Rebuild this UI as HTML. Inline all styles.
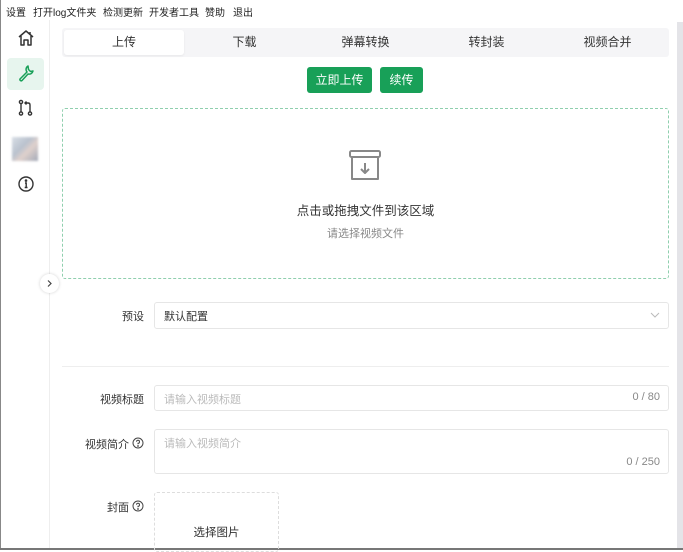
<!DOCTYPE html>
<html><head><meta charset="utf-8"><style>
*{box-sizing:border-box;margin:0;padding:0}
body{width:683px;height:550px;overflow:hidden;background:#fff;font-family:"Liberation Sans","Noto Sans CJK SC",sans-serif;color:#333;position:relative}
.a{position:absolute}
.menu{top:0;left:0;height:20px;font-size:10px;color:#222;}
.menu span{position:absolute;top:4px}
.lab{font-size:11px;color:#333;text-align:right;width:100px}
.inp{border:1px solid #e6e6e6;border-radius:3px;background:#fff}
.ph{font-size:11px;color:#bbb}
.tab{top:28px;height:29px;font-size:12px;color:#333;text-align:center;line-height:29px}
</style></head><body>
<div class="a" style="left:0;top:0;width:1px;height:550px;background:#888"></div>
<div class="a" style="left:0;top:548px;width:683px;height:2px;background:#777"></div>
<div class="a" style="left:677px;top:22px;width:6px;height:526px;background:#e4e4e8"></div>
<div class="a menu" style="width:683px"><span style="left:6px">设置</span><span style="left:33px">打开log文件夹</span><span style="left:103px">检测更新</span><span style="left:149px">开发者工具</span><span style="left:205px">赞助</span><span style="left:233px">退出</span></div>
<div class="a" style="left:49px;top:20px;width:1px;height:528px;background:#eee"></div>
<div class="a" style="left:7px;top:58px;width:37px;height:32px;background:#e7f5ee;border-radius:4px"></div>
<svg class="a" style="left:16px;top:28px" width="20" height="20" viewBox="0 0 20 20" fill="none" stroke="#333" stroke-width="1.5" stroke-linejoin="round"><path d="M3 9 L10 3 L17 9 M5 8 V17 H8 V12 H12 V17 H15 V8"/><path d="M14 4 V6"/></svg>
<svg class="a" style="left:17px;top:64px" width="18" height="18" viewBox="0 0 18 18" fill="none" stroke="#18a058" stroke-width="1.5" stroke-linejoin="round"><path d="M11 2 A4 4 0 0 0 10 8 L3 15 A1.3 1.3 0 0 0 5 16.5 L11 10 A4 4 0 0 0 16 7 L13.5 7.5 L11.5 5.5 Z"/></svg>
<svg class="a" style="left:17px;top:99px" width="18" height="18" viewBox="0 0 18 18" fill="none" stroke="#333" stroke-width="1.4"><circle cx="4" cy="14.5" r="1.6"/><circle cx="13" cy="14.5" r="1.6"/><circle cx="4" cy="3" r="1.6"/><path d="M4 4.6V13 M13 13V6 Q13 4 11 4 H8 M9.5 2.5 L8 4 L9.5 5.5"/></svg>
<div class="a" style="left:12px;top:137px;width:26px;height:24px;background:linear-gradient(135deg,#cfd7e0,#a9b3c2 40%,#d8c6c0 60%,#8d95a7);filter:blur(1px);opacity:.8"></div>
<svg class="a" style="left:17px;top:175px" width="18" height="18" viewBox="0 0 18 18" fill="none" stroke="#333" stroke-width="1.4"><circle cx="9" cy="9" r="7"/><path d="M8 8H9.2V12.5 M7.7 12.5H10.5"/><circle cx="9" cy="5.6" r=".6" fill="#333"/></svg>
<div class="a" style="left:40px;top:274px;width:19px;height:19px;border-radius:50%;background:#fff;box-shadow:0 0 3px rgba(0,0,0,.18)"></div>
<svg class="a" style="left:45px;top:279px" width="9" height="9" viewBox="0 0 9 9" fill="none" stroke="#444" stroke-width="1.2"><path d="M3 1.5 L6 4.5 L3 7.5"/></svg>

<div class="a" style="left:62px;top:28px;width:607px;height:29px;background:#f5f5f7;border-radius:3px"></div>
<div class="a" style="left:64px;top:30px;width:120px;height:25px;background:#fff;border-radius:3px;box-shadow:0 1px 2px rgba(0,0,0,.06)"></div>
<div class="a tab" style="left:64px;width:120px">上传</div>
<div class="a tab" style="left:184px;width:121px">下载</div>
<div class="a tab" style="left:305px;width:121px">弹幕转换</div>
<div class="a tab" style="left:426px;width:121px">转封装</div>
<div class="a tab" style="left:547px;width:121px">视频合并</div>
<div class="a" style="left:307px;top:67px;width:65px;height:26px;background:#18a058;border-radius:3px;color:#fff;font-size:12px;text-align:center;line-height:26px">立即上传</div>
<div class="a" style="left:380px;top:67px;width:43px;height:26px;background:#18a058;border-radius:3px;color:#fff;font-size:12px;text-align:center;line-height:26px">续传</div>
<div class="a" style="left:62px;top:108px;width:607px;height:171px;border:1px dashed #8fcfae;border-radius:3px"></div>
<svg class="a" style="left:348px;top:149px" width="34" height="33" viewBox="0 0 34 33" fill="none" stroke="#888" stroke-width="2" stroke-linejoin="round"><rect x="2" y="2" width="30" height="6" rx="1.5"/><path d="M4 8V30H30V8"/><path d="M17 14V24 M13 20L17 24L21 20"/></svg>
<div class="a" style="left:62px;top:200px;width:607px;text-align:center;font-size:12.5px;color:#333">点击或拖拽文件到该区域</div>
<div class="a" style="left:62px;top:225px;width:607px;text-align:center;font-size:11px;color:#888">请选择视频文件</div>

<div class="a lab" style="left:44px;top:308px">预设</div>
<div class="a inp" style="left:154px;top:302px;width:515px;height:27px"></div>
<div class="a" style="left:164px;top:308px;font-size:11px;color:#333">默认配置</div>
<svg class="a" style="left:650px;top:311px" width="10" height="8" viewBox="0 0 10 8" fill="none" stroke="#bbb" stroke-width="1"><path d="M1 2L5 6L9 2"/></svg>
<div class="a" style="left:62px;top:366px;width:607px;height:1px;background:#eee"></div>

<div class="a lab" style="left:44px;top:391px">视频标题</div>
<div class="a inp" style="left:154px;top:385px;width:515px;height:26px"></div>
<div class="a ph" style="left:164px;top:391px">请输入视频标题</div>
<div class="a" style="left:620px;top:391px;width:40px;text-align:right;font-size:11px;color:#888">0 / 80</div>

<div class="a lab" style="left:29px;top:436px">视频简介</div>
<svg class="a" style="left:132px;top:437px" width="12" height="12" viewBox="0 0 12 12" fill="none" stroke="#444" stroke-width="1"><circle cx="6" cy="6" r="5"/><path d="M4.5 4.7A1.5 1.5 0 1 1 6 6.3V7.3"/><circle cx="6" cy="9" r=".4" fill="#444"/></svg>
<div class="a inp" style="left:154px;top:429px;width:515px;height:45px"></div>
<div class="a ph" style="left:164px;top:435px">请输入视频简介</div>
<div class="a" style="left:610px;top:456px;width:50px;text-align:right;font-size:11px;color:#888">0 / 250</div>

<div class="a lab" style="left:29px;top:499px">封面</div>
<svg class="a" style="left:132px;top:500px" width="12" height="12" viewBox="0 0 12 12" fill="none" stroke="#444" stroke-width="1"><circle cx="6" cy="6" r="5"/><path d="M4.5 4.7A1.5 1.5 0 1 1 6 6.3V7.3"/><circle cx="6" cy="9" r=".4" fill="#444"/></svg>
<div class="a" style="left:154px;top:492px;width:125px;height:60px;border:1px dashed #ddd;border-radius:3px"></div>
<div class="a" style="left:154px;top:524px;width:125px;text-align:center;font-size:11.5px;color:#333">选择图片</div>
</body></html>
